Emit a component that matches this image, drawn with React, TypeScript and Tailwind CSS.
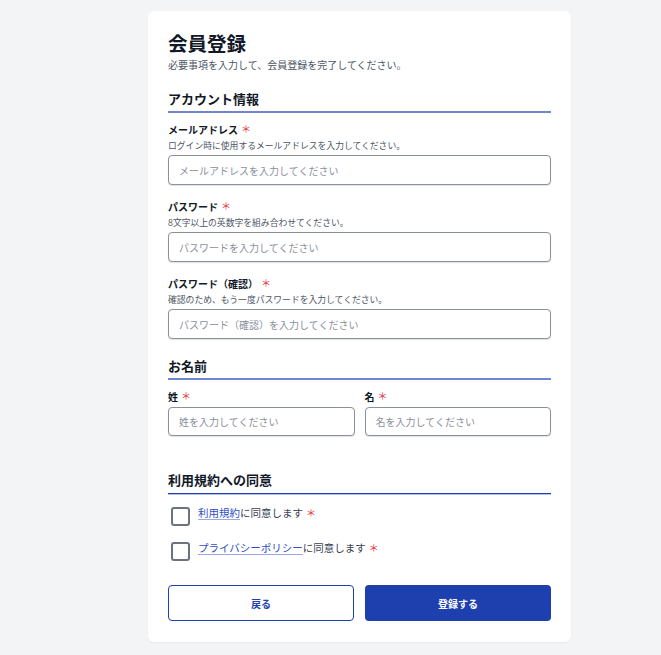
import React from "react";

const font = { fontFamily: '"Noto Sans CJK JP", "Noto Sans", sans-serif' };

function Req() {
  return <span className="ml-[3px] text-[#e5323e] font-normal text-[10px] leading-none">＊</span>;
}

function Field({
  label,
  hint,
  placeholder,
  type = "text",
  className = "",
  inputH = "h-[30px]",
}: {
  label: string;
  hint?: string;
  placeholder: string;
  type?: string;
  className?: string;
  inputH?: string;
}) {
  return (
    <div className={className}>
      <div className="flex items-center h-[16px] text-[10px] font-bold text-[#111827]">
        <span>{label}</span>
        <Req />
      </div>
      {hint && (
        <div className="mt-[2px] h-[13px] leading-[13px] text-[8.8px] text-[#4b5563]">{hint}</div>
      )}
      <input
        type={type}
        placeholder={placeholder}
        className={`mt-[3px] block w-full ${inputH} rounded-[4px] border border-[#8b919c] bg-white pl-[10px] text-[10px] text-[#111827] placeholder:text-[#8a909b] shadow-[0_1px_1px_rgba(0,0,0,0.12)] outline-none`}
        style={font}
      />
    </div>
  );
}

function Check({ link, rowClass = "" }: { link: string; rowClass?: string }) {
  return (
    <label className={`flex items-start ${rowClass}`}>
      <span className="ml-[3px] w-[19px] h-[19px] rounded-[3px] border-2 border-[#6b7280] bg-white shrink-0" />
      <span className="ml-[8px] leading-[12px] text-[10.5px] text-[#374151] flex items-center">
        <a className="text-[#2f4fc4] underline decoration-[#9aa9e3] underline-offset-[2px]">{link}</a>
        <span>に同意します</span>
        <Req />
      </span>
    </label>
  );
}

export default function App() {
  return (
    <div className="min-h-screen bg-[#f3f4f6] pl-[148px] pt-[11px] pb-[13px]" style={font}>
      <div className="w-[423px] rounded-[6px] bg-white px-[20px] pt-[18px] pb-[21px] shadow-[0_1px_2px_rgba(0,0,0,0.05)]">
        <h1 className="text-[19.5px] leading-[28px] font-bold text-[#111827]">会員登録</h1>
        <p className="mt-[1px] text-[10px] leading-[14px] text-[#4b5563]">
          必要事項を入力して、会員登録を完了してください。
        </p>

        <h2 className="mt-[18px] text-[13px] leading-[18px] font-bold text-[#111827] pb-[3px] border-b-2 border-[#7185d0]">
          アカウント情報
        </h2>
        <Field
          className="mt-[8px]"
          label="メールアドレス"
          hint="ログイン時に使用するメールアドレスを入力してください。"
          placeholder="メールアドレスを入力してください"
        />
        <Field
          className="mt-[13px]"
          label="パスワード"
          hint="8文字以上の英数字を組み合わせてください。"
          placeholder="パスワードを入力してください"
        />
        <Field
          className="mt-[13px]"
          label="パスワード（確認）"
          hint="確認のため、もう一度パスワードを入力してください。"
          placeholder="パスワード（確認）を入力してください"
        />

        <h2 className="mt-[18px] text-[13px] leading-[18px] font-bold text-[#111827] pb-[3px] border-b-2 border-[#7185d0]">
          お名前
        </h2>
        <div className="mt-[8px] grid grid-cols-2 gap-[10px]">
          <Field label="姓" placeholder="姓を入力してください" inputH="h-[29px]" />
          <Field label="名" placeholder="名を入力してください" inputH="h-[29px]" />
        </div>

        <h2 className="mt-[35px] text-[13px] leading-[18px] font-bold text-[#111827] pb-[4px] border-b border-[#1e40af] shadow-[0_1px_0_#b4c0ea]">
          利用規約への同意
        </h2>
        <Check rowClass="mt-[13px]" link="利用規約" />
        <Check rowClass="mt-[16px]" link="プライバシーポリシー" />

        <div className="mt-[24px] grid grid-cols-2 gap-[11px]">
          <button
            className="h-[36px] rounded-[4px] border-[1.5px] border-[#1e40af] bg-white text-[10px] font-bold text-[#1e40af]"
            style={font}
          >
            戻る
          </button>
          <button
            className="h-[36px] rounded-[4px] bg-[#1e40af] text-[10px] font-bold text-white"
            style={font}
          >
            登録する
          </button>
        </div>
      </div>
    </div>
  );
}
